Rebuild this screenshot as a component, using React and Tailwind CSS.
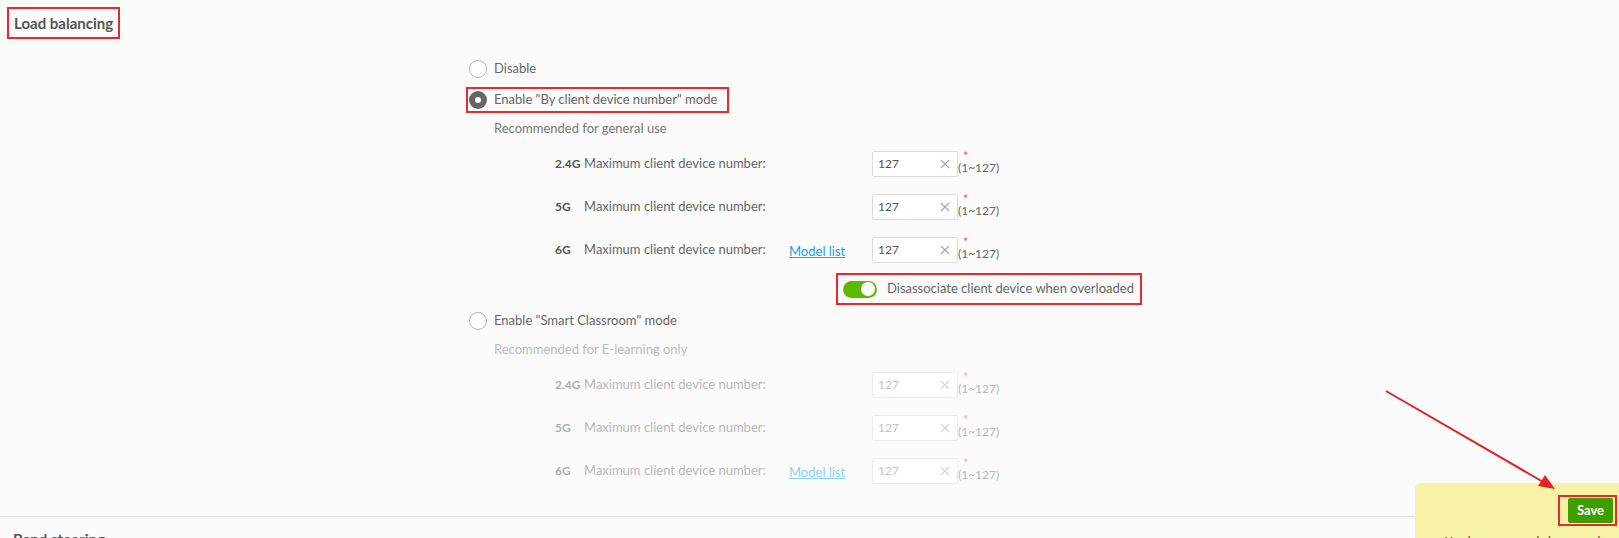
import React from 'react';

const FONT = { fontFamily: 'Lato, "Noto Sans", sans-serif' };

// Radio bouton (coché ou non)
const Radio = ({ checked }) =>
  checked ? (
    <span className="w-[18px] h-[18px] rounded-full bg-[#666] flex items-center justify-center shrink-0">
      <span className="w-[6px] h-[6px] rounded-full bg-white" />
    </span>
  ) : (
    <span className="w-[18px] h-[18px] rounded-full border border-[#b5b5b5] bg-white shrink-0" />
  );

const NumberInput = ({ disabled }) => (
  <div className="flex items-start">
    <div
      className={`w-[86px] h-[26px] rounded-[2px] bg-white border flex items-center justify-between pl-[5px] pr-[7px] ${
        disabled ? 'border-[#ececec] text-[#c4c4c4]' : 'border-[#dcdcdc] text-[#555]'
      }`}
    >
      <span className="text-[12px]">127</span>
      <svg width="10" height="10" viewBox="0 0 10 10">
        <path d="M1 1 L9 9 M9 1 L1 9" stroke={disabled ? '#d6d6d6' : '#a8a8a8'} strokeWidth="1.2" />
      </svg>
    </div>
    <div className="relative h-[26px]">
      <span className={`absolute left-[5px] top-[1px] text-[13px] leading-[8px] ${disabled ? 'text-[#f5b5b5]' : 'text-[#f05a5a]'}`}>*</span>
      <span className={`block mt-[10px] text-[12px] leading-[14px] whitespace-nowrap ${disabled ? 'text-[#b8b8b8]' : 'text-[#666]'}`}>(1~127)</span>
    </div>
  </div>
);

const FieldRow = ({ band, link, disabled }) => (
  <div className="h-[43px] flex items-center pl-[89px]">
    <span className={`w-[29px] text-[12px] font-bold ${disabled ? 'text-[#b0b0b0]' : 'text-[#555]'}`}>{band}</span>
    <span className={`w-[205px] text-[13px] ${disabled ? 'text-[#b8b8b8]' : 'text-[#666]'}`}>
      Maximum client device number:
    </span>
    <span className="w-[83px]">
      {link && (
        <span className={`text-[13px] underline ${disabled ? 'text-[#8fd0f2]' : 'text-[#1ea0e6]'}`}>Model list</span>
      )}
    </span>
    <NumberInput disabled={disabled} />
  </div>
);

export default function App() {
  return (
    <div className="relative w-full h-[538px] overflow-hidden bg-[#fbfbfb]" style={FONT}>
      {/* Titre */}
      <div className="pt-[7px] pl-[7px]">
        <div className="inline-flex items-center h-[32px] border-2 border-[#e8282b] px-[5px]">
          <span className="text-[15px] font-bold text-[#555]">Load balancing</span>
        </div>
      </div>

      <div className="pl-[466px]">
        <div className="mt-[15px] h-[30px] flex items-center pl-[3px] gap-[7px]">
          <Radio />
          <span className="text-[13px] text-[#666]">Disable</span>
        </div>

        <div className="mt-[3px] inline-flex items-center h-[26px] border-2 border-[#e8282b] pl-[1px] pr-[10px] gap-[7px]">
          <Radio checked />
          <span className="text-[13px] text-[#666]">Enable "By client device number" mode</span>
        </div>

        <div className="mt-[3px] h-[26px] flex items-center pl-[28px]">
          <span className="text-[13px] text-[#777]">Recommended for general use</span>
        </div>

        <FieldRow band="2.4G" />
        <FieldRow band="5G" />
        <FieldRow band="6G" link />

        <div className="mt-[2px] pl-[370px]">
          <div className="inline-flex items-center h-[32px] border-2 border-[#e8282b] pl-[5px] pr-[6px] gap-[10px]">
            <span className="w-[34px] h-[17px] rounded-full bg-[#5fb800] flex items-center justify-end pr-[2px]">
              <span className="w-[14px] h-[14px] rounded-full bg-white" />
            </span>
            <span className="text-[13px] text-[#666]">Disassociate client device when overloaded</span>
          </div>
        </div>

        <div className="h-[32px] flex items-center pl-[3px] gap-[7px]">
          <Radio />
          <span className="text-[13px] text-[#666]">Enable "Smart Classroom" mode</span>
        </div>

        <div className="h-[26px] flex items-center pl-[28px]">
          <span className="text-[13px] text-[#bbb]">Recommended for E-learning only</span>
        </div>

        <FieldRow band="2.4G" disabled />
        <FieldRow band="5G" disabled />
        <FieldRow band="6G" link disabled />
      </div>

      <div className="mt-[24px] border-t border-[#e3e3e3]" />
      <div className="pl-[13px] pt-[10px]">
        <span className="text-[15px] font-bold text-[#555]">Band steering</span>
      </div>

      {/* Barre de sauvegarde */}
      <div className="absolute left-[1415px] top-[483px] right-0 bottom-0 rounded-tl-[6px] bg-[#f7f2a8] overflow-hidden">
        <div className="flex items-center pl-[143px] pt-[12px] gap-[4px]">
          <div className="border-2 border-[#e8282b] p-[1px] pl-[8px] pr-[2px]">
            <div className="w-[45px] h-[25px] rounded-[2px] bg-[#3f9d00] flex items-center justify-center text-[13px] font-bold text-white">
              Save
            </div>
          </div>
          <span className="text-[12px] text-[#666]">Cancel</span>
        </div>
        <div className="pl-[30px] pt-[6px] text-[12px] text-[#444] whitespace-nowrap">
          You have unsaved changes, please save them
        </div>
      </div>

      {/* Flèche d'annotation */}
      <svg className="absolute left-0 top-0 pointer-events-none" width="1619" height="538">
        <line x1="1386" y1="391" x2="1545" y2="483" stroke="#e3231f" strokeWidth="2" />
        <polygon points="1555,489 1538,486 1545,475" fill="#e3231f" />
      </svg>
    </div>
  );
}
